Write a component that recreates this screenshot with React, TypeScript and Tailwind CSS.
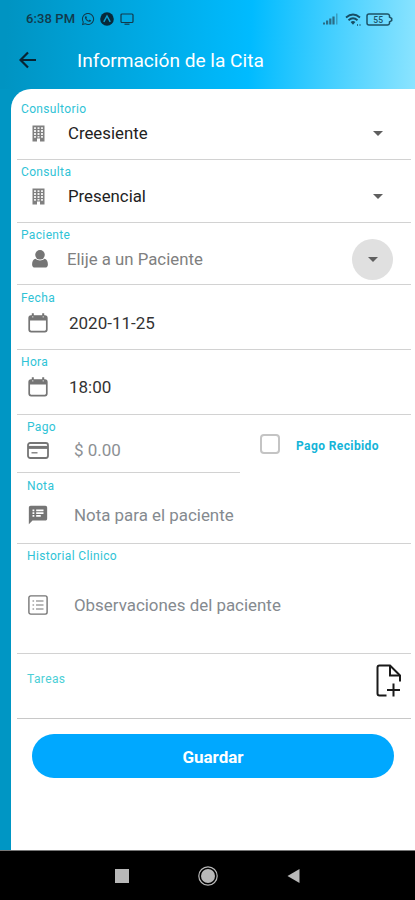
import type { ReactNode } from "react";
import { FaWhatsapp } from "react-icons/fa";
import { MdSpeakerNotes } from "react-icons/md";

const BuildingIcon = () => (
  <svg viewBox="0 0 13 17" className="w-[13px] h-[17px]">
    <path d="M0.500 0.500h12v16H8v-3H5v3H0.500z" fill="#808080" />
    <path d="M3 2.200v11M6.500 2.200v10.400M10 2.200v11" fill="none" stroke="#f0f0f0" strokeWidth="1.900" strokeDasharray="1.900 1" />
  </svg>
);

const CalendarIcon = () => (
  <svg viewBox="0 0 20 20" className="w-5 h-5" fill="none" stroke="#757575">
    <rect x="1.200" y="3" width="17.600" height="15.600" rx="2" strokeWidth="1.700" />
    <path d="M1.500 5.200h17" strokeWidth="4.600" />
    <path d="M4.800 0.300v3M15.200 0.300v3" strokeWidth="2" />
    <path d="M4.800 3v1.600M15.200 3v1.600" stroke="#d0d0d0" strokeWidth="1" />
  </svg>
);

const UserIcon = () => (
  <svg viewBox="0 0 16 18" className="w-4 h-[18px] ml-1" fill="#757575">
    <ellipse cx="8" cy="4.800" rx="4.800" ry="4.800" />
    <path d="M3.400 8.800c2.800 2.200 6.400 2.200 9.200 0 2.400.5 3.300 3 3.300 5.600 0 2-1 3.200-2.800 3.200H2.900c-1.800 0-2.800-1.200-2.800-3.200 0-2.600.9-5.100 3.300-5.600z" />
  </svg>
);

const CardIcon = () => (
  <svg viewBox="0 0 22 17" className="w-[22px] h-[17px]" fill="none" stroke="#757575">
    <rect x="1" y="1" width="20" height="15" rx="2.200" strokeWidth="1.800" />
    <path d="M1 5.400h20" strokeWidth="3" />
    <path d="M4.500 10.800h6" strokeWidth="1.300" />
  </svg>
);

const ListIcon = () => (
  <svg viewBox="0 0 20 20" className="w-5 h-5" fill="none" stroke="#757575">
    <rect x="0.900" y="0.900" width="18.200" height="18.200" rx="1.800" strokeWidth="1.400" />
    <path d="M4.500 6h1.600M4.500 10h1.600M4.500 14h1.600M8 6h7.500M8 10h7.500M8 14h7.500" strokeWidth="1.200" />
  </svg>
);

const FilePlusIcon = () => (
  <svg viewBox="0 0 26 34" className="w-[26px] h-[34px]" fill="none" stroke="#1a1a1a" strokeWidth="2">
    <path d="M10.500 31.500H3.500Q1.500 31.500 1.500 29.500V3.500Q1.500 1.500 3.500 1.500H14L24 11.500v6" />
    <path d="M14 1.500V11.500h10" />
    <path d="M17.500 19.500v13M11 26h13" />
  </svg>
);

const Caret = () => (
  <svg viewBox="0 0 10 5" className="block w-[10px] h-[5px]" fill="#5f5f5f">
    <path d="M0 0h10L5 5z" />
  </svg>
);

type FieldProps = {
  label: string;
  className: string;
  labelClass?: string;
  bodyClass?: string;
  icon: ReactNode;
  children: ReactNode;
};

const Field = ({ label, className, labelClass = "pl-1", bodyClass = "mt-1", icon, children }: FieldProps) => (
  <div className={`border-b border-[#d2d2d2] ${className}`}>
    <div className={`h-4 leading-4 text-[12px] tracking-[0.35px] text-[#2fc3d6] ${labelClass}`}>{label}</div>
    <div className={`flex items-center h-6 text-[17px] ${bodyClass}`}>
      <span className="w-[42px] shrink-0 flex justify-center">{icon}</span>
      {children}
    </div>
  </div>
);

const StatusBar = () => (
  <div className="flex items-center h-[38px] pl-[26px] pr-[22px] text-[#123a4c]">
    <span className="text-[13px] font-medium tracking-[0.1px] w-[50px] whitespace-nowrap">6:38 PM</span>
    <FaWhatsapp className="w-[14px] h-[14px] ml-[5px]" />
    <svg viewBox="0 0 14 14" className="w-[14px] h-[14px] ml-[5px]">
      <circle cx="7" cy="7" r="6.800" fill="#08293a" />
      <path d="M3.800 9.800L7 4l3.200 5.800" fill="none" stroke="#0a9fd0" strokeWidth="1.500" />
    </svg>
    <svg viewBox="0 0 14 12" className="w-[14px] h-3 ml-[6px]" fill="none" stroke="#123a4c" strokeWidth="1.200">
      <rect x="1" y="1" width="12" height="8.500" rx="1" />
      <path d="M4.500 11.200h5" />
    </svg>
    <svg viewBox="0 0 16 12" className="w-4 h-3 ml-auto" fill="#2a6c86">
      <path d="M0 11.500h2v-2H0zM3 11.500h2.200V7.500H3zM6.200 11.500h2.200V5.500H6.200zM9.400 11.500h2.200V3.500H9.400z" />
      <path d="M13 11.500h1.500V0.500H13z" opacity="0.500" />
    </svg>
    <svg viewBox="0 0 16 13" className="w-4 h-[13px] ml-[6px]" fill="none" stroke="#174d64" strokeWidth="1.800">
      <path d="M1 4.500q7-6 14 0M3.500 7.200q4.500-3.800 9 0" />
      <path d="M5.600 9q2.400-1.800 4.800 0L8 11.800z" fill="#174d64" stroke="none" />
      <path d="M12 12h1M14.500 12h1" strokeWidth="1.500" />
    </svg>
    <svg viewBox="0 0 27 13" className="w-[27px] h-[13px] ml-[5px]" fill="none" stroke="#1d5166" strokeWidth="1.500">
      <path d="M3 1h18.500q1.500 0 2 1.500v1.500l2.200 1.500v2l-2.200 1.500v1.500q-.5 1.500-2 1.500H3q-2 0-2-2V3q0-2 2-2z" />
      <text x="12.200" y="9.600" textAnchor="middle" fontSize="8.500" fontWeight="500" fill="#1d5166" stroke="none">
        55
      </text>
    </svg>
  </div>
);

export default function App() {
  return (
    <div className="w-full h-[900px] flex flex-col overflow-hidden font-['Roboto',sans-serif] bg-[#0096c4]">
      <div className="bg-[linear-gradient(93deg,#0094c2_2%,#00bbff_60%,#8ce4ff_100%)] h-[109px] shrink-0">
        <StatusBar />
        <header className="flex items-center h-[51px] pb-2 pl-[19px] text-white">
          <svg viewBox="0 0 18 18" className="w-[18px] h-[18px]" fill="none" stroke="#082433" strokeWidth="2.200">
            <path d="M17 9H2M9 1.500L1.500 9 9 16.500" />
          </svg>
          <h1 className="ml-[40px] pt-[3px] text-[19.100px] whitespace-nowrap">Información de la Cita</h1>
        </header>
      </div>

      <main className="flex-1 min-h-0 -mt-5 pl-[11px] bg-[linear-gradient(90deg,#0096c4_11px,transparent_11px)]">
        <form className="h-full rounded-tl-[20px] bg-white pl-[6px] pr-1">
          <Field label="Consultorio" className="h-[71px] pt-3" icon={<BuildingIcon />}>
            <span className="ml-[9px] pt-[2px] text-[16.800px] text-[#222]">Creesiente</span>
            <span className="ml-auto mr-[28px]"><Caret /></span>
          </Field>
          <Field label="Consulta" className="h-[63px] pt-1" icon={<BuildingIcon />}>
            <span className="ml-[9px] pt-[2px] text-[16.800px] text-[#222]">Presencial</span>
            <span className="ml-auto mr-[28px]"><Caret /></span>
          </Field>
          <Field label="Paciente" className="h-[62px] pt-1" icon={<UserIcon />}>
            <span className="ml-[8px] pt-[2px] text-[16.800px] text-[#808080]">Elije a un Paciente</span>
            <span className="ml-auto mr-[18px] w-[41px] h-[41px] rounded-full bg-[#e0e0e0] flex items-center justify-center">
              <Caret />
            </span>
          </Field>
          <Field label="Fecha" className="h-[65px] pt-[5px]" bodyClass="mt-[5px]" icon={<CalendarIcon />}>
            <span className="ml-[10px] pt-[2px] text-[#333]">2020-11-25</span>
          </Field>
          <Field label="Hora" className="h-[65px] pt-1" bodyClass="mt-[5px]" icon={<CalendarIcon />}>
            <span className="ml-[10px] pt-[2px] text-[#333]">18:00</span>
          </Field>
          <div className="flex">
            <Field
              label="Pago"
              className="w-[223px] h-[58px] pt-1"
              labelClass="pl-[10px]"
              bodyClass="mt-[3px]"
              icon={<CardIcon />}
            >
              <span className="ml-[15px] pt-[2px] text-[#8c9094]">$ 0.00</span>
            </Field>
            <label className="flex items-center h-[58px] pl-5">
              <span className="w-5 h-5 rounded-[4px] border-2 border-[#c4c4c4]" />
              <span className="ml-4 pt-[3px] text-[12px] tracking-[0.4px] font-bold text-[#14b4d8]">Pago Recibido</span>
            </label>
          </div>
          <Field
            label="Nota"
            className="h-[71px] pt-[5px]"
            labelClass="pl-[10px]"
            bodyClass="mt-[9px]"
            icon={<MdSpeakerNotes size={22} color="#757575" />}
          >
            <span className="ml-[15px] pt-[2px] text-[16.900px] text-[#858a8f]">Nota para el paciente</span>
          </Field>
          <Field
            label="Historial Clinico"
            className="h-[110px] pt-1"
            labelClass="pl-[10px]"
            bodyClass="mt-[29px]"
            icon={<ListIcon />}
          >
            <span className="ml-[15px] pt-[2px] text-[16.900px] text-[#858a8f]">Observaciones del paciente</span>
          </Field>
          <div className="flex items-start justify-between h-[65px] pl-[10px] pr-[9px] pt-[10px] border-b border-[#c8c8c8]">
            <span className="mt-[7px] leading-4 text-[12px] tracking-[0.4px] text-[#4ccfd6]">Tareas</span>
            <FilePlusIcon />
          </div>
          <button
            type="button"
            className="block mt-[15px] ml-[15px] w-[362px] h-[44px] pt-[3px] rounded-full bg-[#00a8ff] text-white font-bold text-[17px]"
          >
            Guardar
          </button>
        </form>
      </main>

      <nav className="h-[50px] shrink-0 bg-black border-t border-[#777] flex items-center pl-[115px]">
        <span className="w-[14px] h-[14px] bg-[#b8b8b8]" />
        <svg viewBox="0 0 20 20" className="w-5 h-5 ml-[69px]">
          <circle cx="10" cy="10" r="9.200" fill="none" stroke="#b8b8b8" strokeWidth="1.200" />
          <circle cx="10" cy="10" r="7" fill="#b8b8b8" />
        </svg>
        <svg viewBox="0 0 13 14" className="w-[13px] h-[14px] ml-[69px]" fill="#b8b8b8">
          <path d="M12.500 0v14L0.500 7z" />
        </svg>
      </nav>
    </div>
  );
}
